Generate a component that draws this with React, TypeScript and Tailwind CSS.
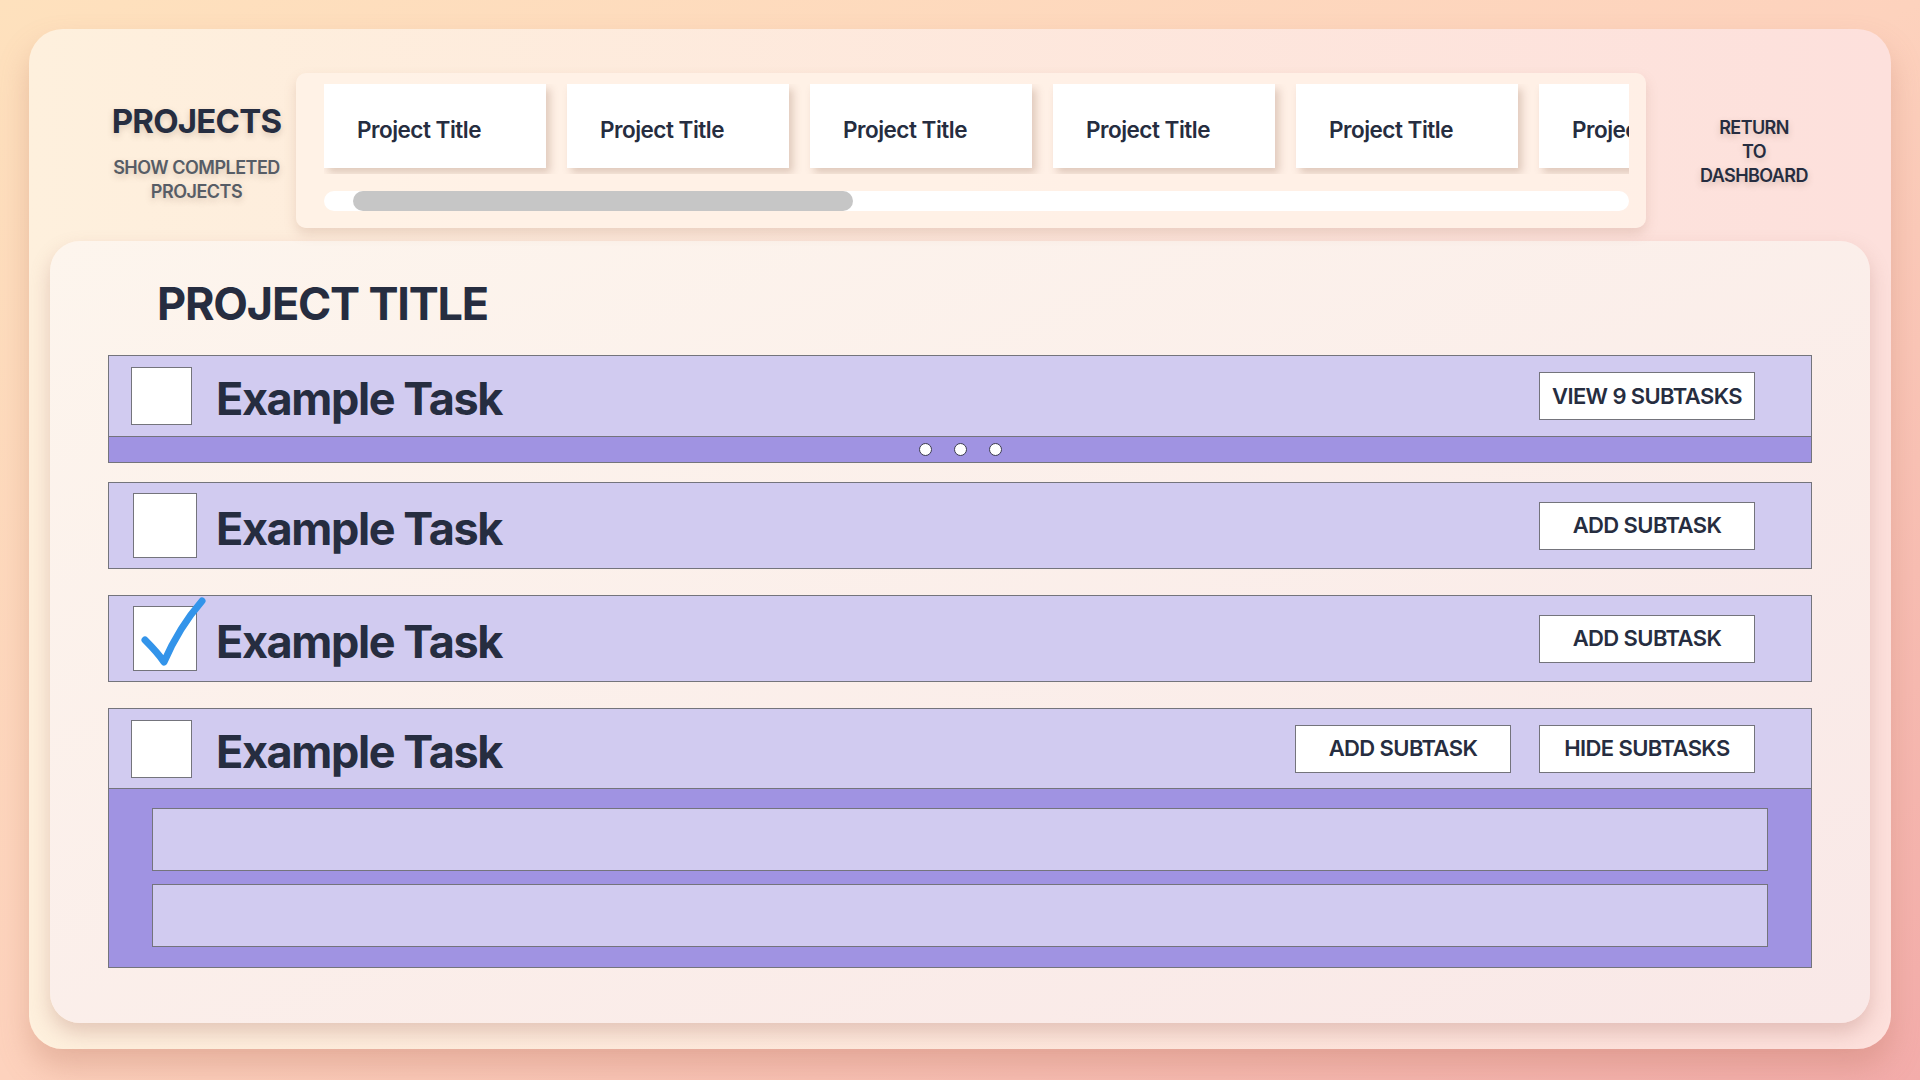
import React from "react";

// Task board mock: projects carousel on top, task list for the selected project below

const projects = Array.from({ length: 8 }, (_, i) => ({ id: i, title: "Project Title" }));

const Checkbox = ({ w, h, checked }: { w: string; h: string; checked?: boolean }) => (
  <div className={`relative shrink-0 bg-white border-[1.5px] border-[#74747c] ${w} ${h}`}>
    {checked && (
      <svg
        className="absolute left-[2px] top-[-8px] w-[72px] h-[74px] overflow-visible"
        viewBox="0 0 72 74"
        fill="none"
      >
        <path
          d="M9 41 C 14 46, 22 54, 28 63 C 38 40, 52 18, 66 2"
          stroke="#3394ea"
          strokeWidth="7"
          strokeLinecap="round"
          strokeLinejoin="round"
        />
      </svg>
    )}
  </div>
);

const Button = ({ label }: { label: string }) => (
  <button className="w-[216px] h-[48px] shrink-0 bg-white border-[1.5px] border-[#74747c] text-[22px] font-semibold text-[#262d40] tracking-[-0.6px]">
    {label}
  </button>
);

const TaskText = ({ className = "" }: { className?: string }) => (
  <span className={`pt-[6px] flex-1 text-[45px] font-bold tracking-[-1.4px] ${className}`}>Example Task</span>
);

const App = () => {
  return (
    <div className="min-h-screen w-full bg-gradient-to-br from-[#fee1bd] via-[#fdd2bd] to-[#f3acaa] p-[29px] font-['Inter','Liberation_Sans',sans-serif] text-[#262d40]">
      {/* Outer card */}
      <div className="h-[1020px] rounded-[34px] bg-gradient-to-r from-[#fef0dd] to-[#fde0dc] shadow-[0_18px_30px_rgba(190,120,100,0.35)] px-[21px] pt-[44px]">
        {/* Header row */}
        <div className="flex items-center">
          <div className="ml-[59px] pt-[4px] w-[175px] flex flex-col items-center text-center">
            <h1 className="text-[33px] leading-[40px] font-bold tracking-[-0.8px] [text-shadow:0_3px_6px_rgba(120,90,70,0.25)]">
              PROJECTS
            </h1>
            <button className="mt-[15px] text-[18px] leading-[24px] font-semibold text-[#575d66] tracking-[-0.5px] whitespace-nowrap [text-shadow:0_3px_6px_rgba(120,90,70,0.25)]">
              SHOW COMPLETED
              <br />
              PROJECTS
            </button>
          </div>

          {/* Carousel */}
          <div className="ml-[12px] w-[1350px] h-[155px] rounded-[10px] bg-[#fff3e8]/80 shadow-[0_6px_12px_rgba(180,130,110,0.25)] pl-[28px] pr-[17px] pt-[11px]">
            <div className="w-[1305px] overflow-hidden">
              <div className="flex gap-[21px] pb-[6px]">
                {projects.map((p) => (
                  <div
                    key={p.id}
                    className="w-[222px] h-[84px] shrink-0 bg-white shadow-[4px_5px_8px_rgba(150,110,90,0.3)] flex items-center pl-[33px] pt-[8px] text-[22.5px] font-semibold tracking-[-0.5px]"
                  >
                    {p.title}
                  </div>
                ))}
              </div>
            </div>
            <div className="mt-[17px] w-[1305px] h-[20px] rounded-full bg-white pl-[29px]">
              <div className="w-[500px] h-[20px] rounded-full bg-[#c6c6c6]" />
            </div>
          </div>

          <button className="flex-1 pr-[8px] pt-[2px] text-center text-[18px] leading-[24px] font-semibold tracking-[-0.6px] [text-shadow:0_3px_6px_rgba(120,90,70,0.25)]">
            RETURN
            <br />
            TO
            <br />
            DASHBOARD
          </button>
        </div>

        {/* Inner card */}
        <div className="mt-[13px] h-[782px] rounded-[30px] bg-gradient-to-br from-[#fdf5ed] to-[#f9e8e7] shadow-[0_10px_20px_rgba(170,110,100,0.3)] px-[58px] pt-[40px]">
          <h2 className="ml-[49px] text-[45px] leading-[46px] font-bold tracking-[-1.2px]">PROJECT TITLE</h2>

          {/* Task 1: collapsed with subtasks */}
          <div className="mt-[28px] border-[1.5px] border-[#74747c] bg-[#d1cbf0]">
            <div className="h-[80px] flex items-center pl-[22px] pr-[56px]">
              <Checkbox w="w-[61px]" h="h-[58px]" />
              <TaskText className="ml-[24px]" />
              <Button label="VIEW 9 SUBTASKS" />
            </div>
            <div className="h-[26px] border-t-[1.5px] border-[#74747c] bg-[#a093e2] flex items-center justify-center gap-[22px]">
              <span className="w-[13px] h-[13px] rounded-full bg-white border border-[#3b3b50]" />
              <span className="w-[13px] h-[13px] rounded-full bg-white border border-[#3b3b50]" />
              <span className="w-[13px] h-[13px] rounded-full bg-white border border-[#3b3b50]" />
            </div>
          </div>

          {/* Task 2 */}
          <div className="mt-[19px] h-[87px] border-[1.5px] border-[#74747c] bg-[#d1cbf0] flex items-center pl-[24px] pr-[56px]">
            <Checkbox w="w-[64px]" h="h-[65px]" />
            <TaskText className="ml-[19px]" />
            <Button label="ADD SUBTASK" />
          </div>

          {/* Task 3: done */}
          <div className="mt-[26px] h-[87px] border-[1.5px] border-[#74747c] bg-[#d1cbf0] flex items-center pl-[24px] pr-[56px]">
            <Checkbox w="w-[64px]" h="h-[65px]" checked />
            <TaskText className="ml-[19px]" />
            <Button label="ADD SUBTASK" />
          </div>

          {/* Task 4: expanded */}
          <div className="mt-[26px] border-[1.5px] border-[#74747c] bg-[#a093e2]">
            <div className="h-[80px] bg-[#d1cbf0] border-b-[1.5px] border-[#74747c] flex items-center pl-[22px] pr-[56px]">
              <Checkbox w="w-[61px]" h="h-[58px]" />
              <TaskText className="ml-[24px]" />
              <div className="flex gap-[28px]">
                <Button label="ADD SUBTASK" />
                <Button label="HIDE SUBTASKS" />
              </div>
            </div>
            <div className="flex flex-col gap-[13px] pt-[19px] pb-[20px] px-[43px]">
              <div className="h-[63px] bg-[#d1cbf0] border-[1.5px] border-[#74747c]" />
              <div className="h-[63px] bg-[#d1cbf0] border-[1.5px] border-[#74747c]" />
            </div>
          </div>
        </div>
      </div>
    </div>
  );
};

export default App;
